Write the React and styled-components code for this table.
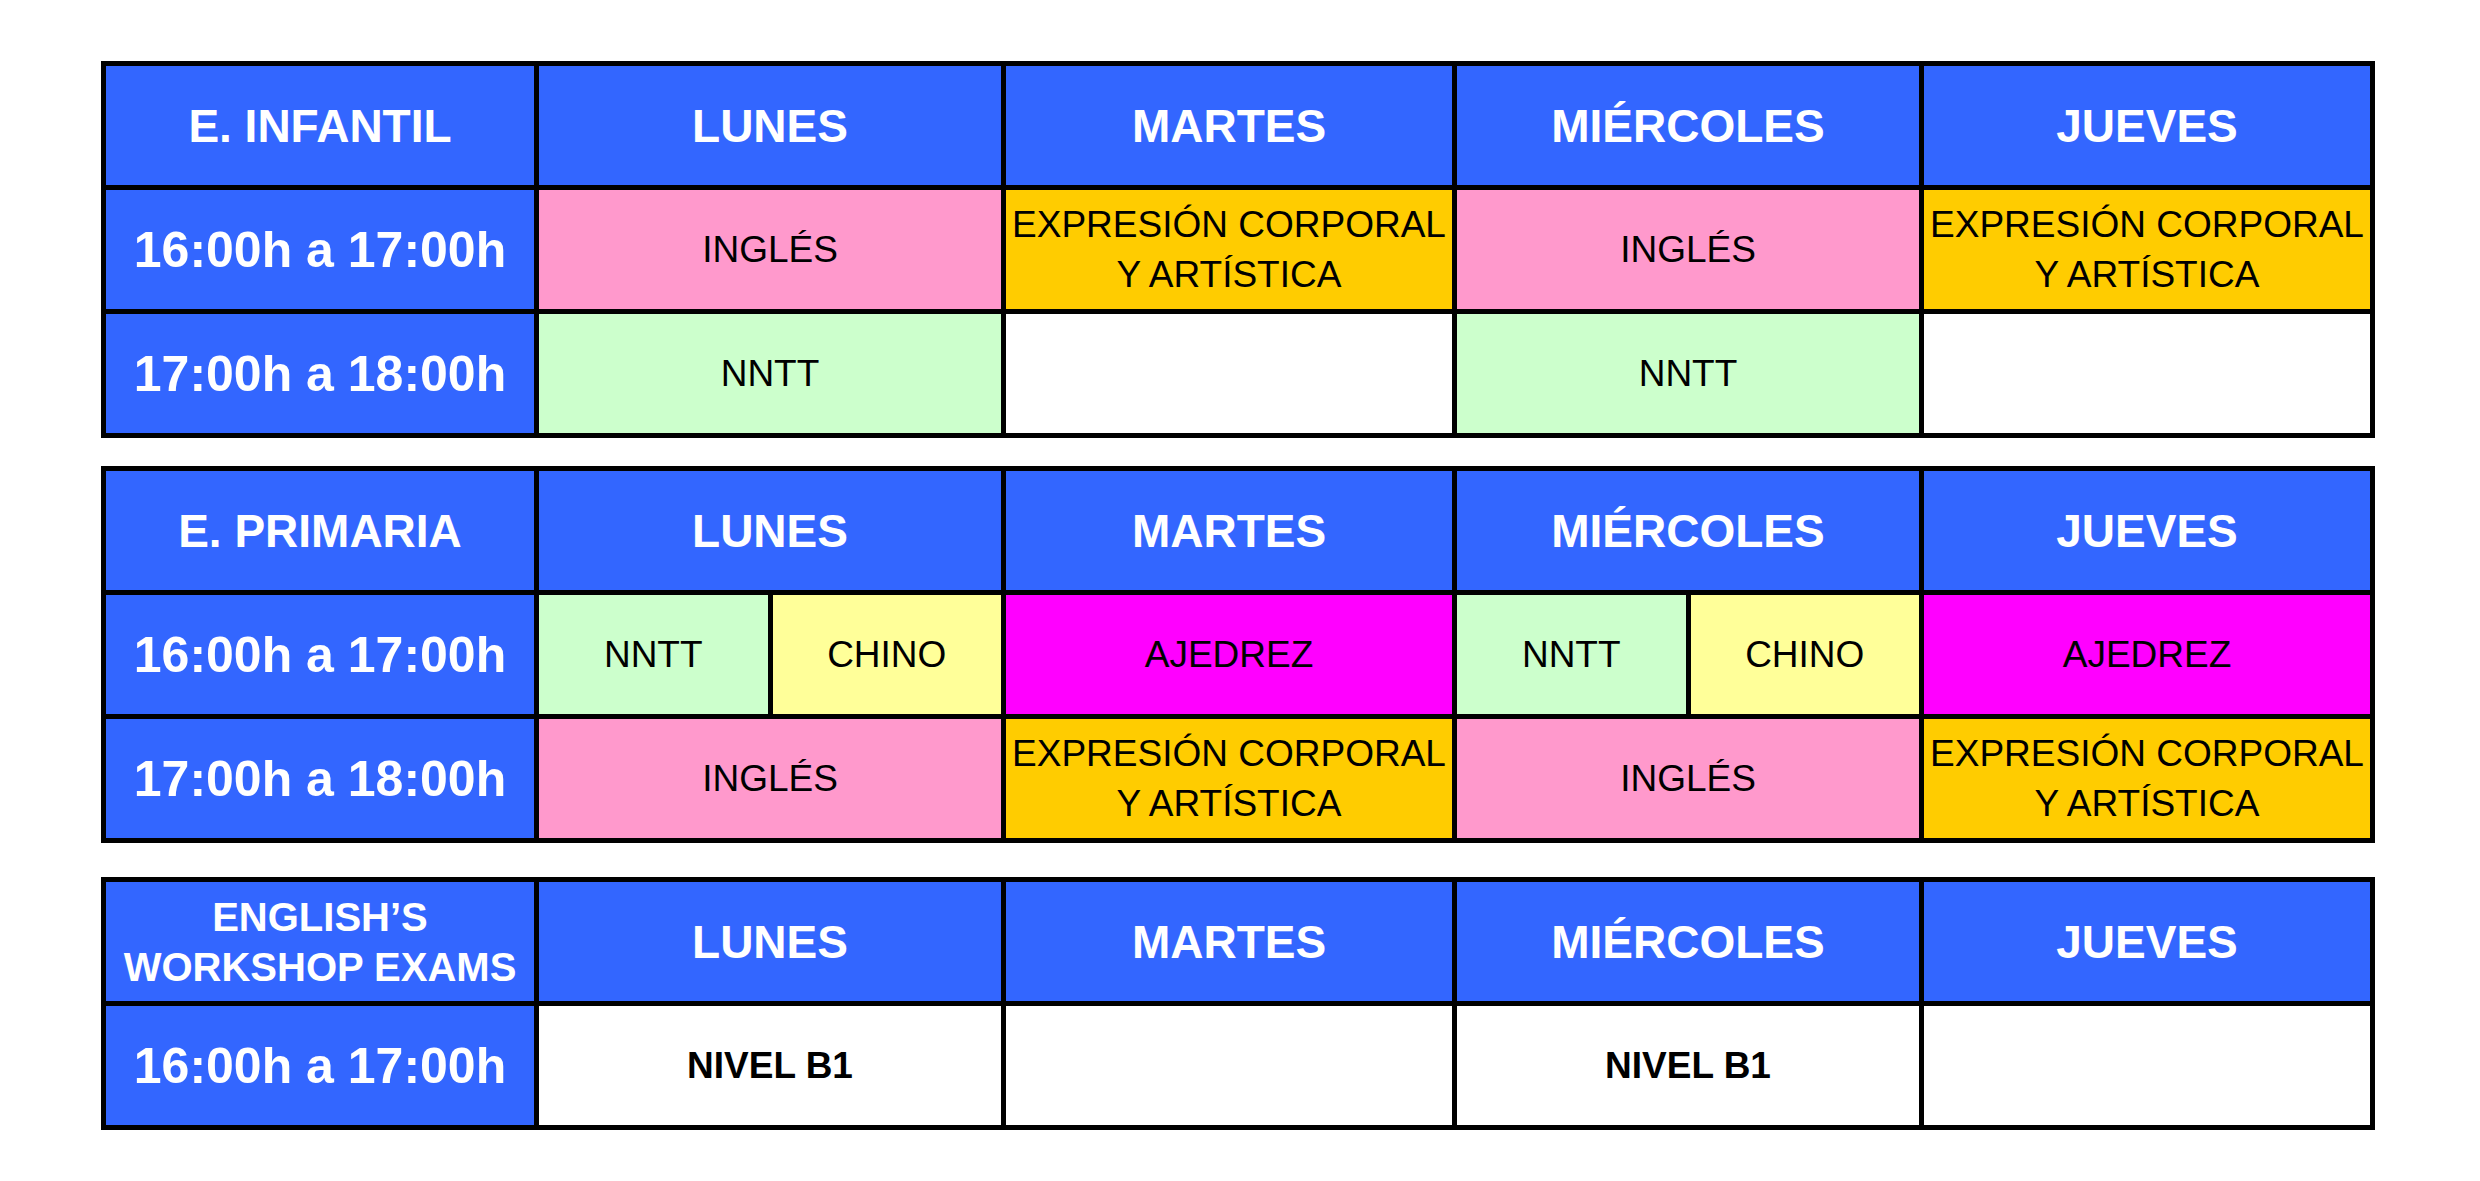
import React from "react";
import styled, { createGlobalStyle } from "styled-components";

const GlobalStyle = createGlobalStyle`
    html, body {
        margin: 0;
        padding: 0;
        background: #ffffff;
    }
    body {
        font-family: "Liberation Sans", Arial, sans-serif;
    }
`;

const COLORS = {
    blue: "#3366FF",
    pink: "#FF99CC",
    gold: "#FFCC00",
    green: "#CCFFCC",
    yellow: "#FFFF99",
    magenta: "#FF00FF",
    white: "#FFFFFF",
};

const Page = styled.div`
    display: flex;
    flex-direction: column;
    align-items: flex-start;
    padding: 61px 0 0 101px;
    width: 2480px;
    height: 1181px;
    box-sizing: border-box;
`;

const Schedule = styled.div`
    display: grid;
    grid-template-columns: 428px 462px 446px 462px 446px;
    grid-auto-rows: 119px;
    gap: 5px;
    padding: 5px;
    background: #000000;
    margin-top: ${(p) => p.$spacing || 0}px;
`;

const Cell = styled.div`
    display: flex;
    align-items: center;
    justify-content: center;
    text-align: center;
    background: ${(p) => p.$bg || COLORS.white};
    color: #000000;
    font-size: 37px;
    line-height: 50px;
    font-weight: ${(p) => (p.$bold ? "bold" : "normal")};
    white-space: nowrap;
`;

const HeadCell = styled(Cell)`
    background: ${COLORS.blue};
    color: #ffffff;
    font-weight: bold;
    font-size: ${(p) => (p.$small ? 40 : 46)}px;
    line-height: 50px;
`;

const TimeCell = styled(HeadCell)`
    font-size: 50px;
`;

const SplitCell = styled.div`
    display: grid;
    grid-template-columns: 1fr 1fr;
    gap: 5px;
    background: #000000;
`;

const DAYS = ["LUNES", "MARTES", "MIÉRCOLES", "JUEVES"];

const expresion = { text: ["EXPRESIÓN CORPORAL", "Y ARTÍSTICA"], bg: COLORS.gold };
const ingles = { text: ["INGLÉS"], bg: COLORS.pink };
const nntt = { text: ["NNTT"], bg: COLORS.green };
const chino = { text: ["CHINO"], bg: COLORS.yellow };
const ajedrez = { text: ["AJEDREZ"], bg: COLORS.magenta };
const empty = { text: [], bg: COLORS.white };
const b1 = { text: ["NIVEL B1"], bg: COLORS.white, bold: true };

const schedules = [
    {
        title: ["E. INFANTIL"],
        spacing: 0,
        rows: [
            { time: "16:00h a 17:00h", cells: [ingles, expresion, ingles, expresion] },
            { time: "17:00h a 18:00h", cells: [nntt, empty, nntt, empty] },
        ],
    },
    {
        title: ["E. PRIMARIA"],
        spacing: 28,
        rows: [
            {
                time: "16:00h a 17:00h",
                cells: [{ split: [nntt, chino] }, ajedrez, { split: [nntt, chino] }, ajedrez],
            },
            { time: "17:00h a 18:00h", cells: [ingles, expresion, ingles, expresion] },
        ],
    },
    {
        title: ["ENGLISH’S", "WORKSHOP EXAMS"],
        small: true,
        spacing: 34,
        rows: [{ time: "16:00h a 17:00h", cells: [b1, empty, b1, empty] }],
    },
];

const Lines = ({ lines }) =>
    lines.map((line, i) => (
        <React.Fragment key={i}>
            {i > 0 && <br />}
            {line}
        </React.Fragment>
    ));

const Subject = ({ item }) => {
    if (item.split) {
        return (
            <SplitCell>
                {item.split.map((part, i) => (
                    <Subject key={i} item={part} />
                ))}
            </SplitCell>
        );
    }
    return (
        <Cell $bg={item.bg} $bold={item.bold}>
            <div>
                <Lines lines={item.text} />
            </div>
        </Cell>
    );
};

const App = () => {
    return (
        <>
            <GlobalStyle />
            <Page>
                {schedules.map((s, idx) => (
                    <Schedule key={idx} $spacing={s.spacing}>
                        <HeadCell $small={s.small}>
                            <div>
                                <Lines lines={s.title} />
                            </div>
                        </HeadCell>
                        {DAYS.map((d) => (
                            <HeadCell key={d}>{d}</HeadCell>
                        ))}
                        {s.rows.map((row) => (
                            <React.Fragment key={row.time}>
                                <TimeCell>{row.time}</TimeCell>
                                {row.cells.map((c, i) => (
                                    <Subject key={i} item={c} />
                                ))}
                            </React.Fragment>
                        ))}
                    </Schedule>
                ))}
            </Page>
        </>
    );
};

export default App;
